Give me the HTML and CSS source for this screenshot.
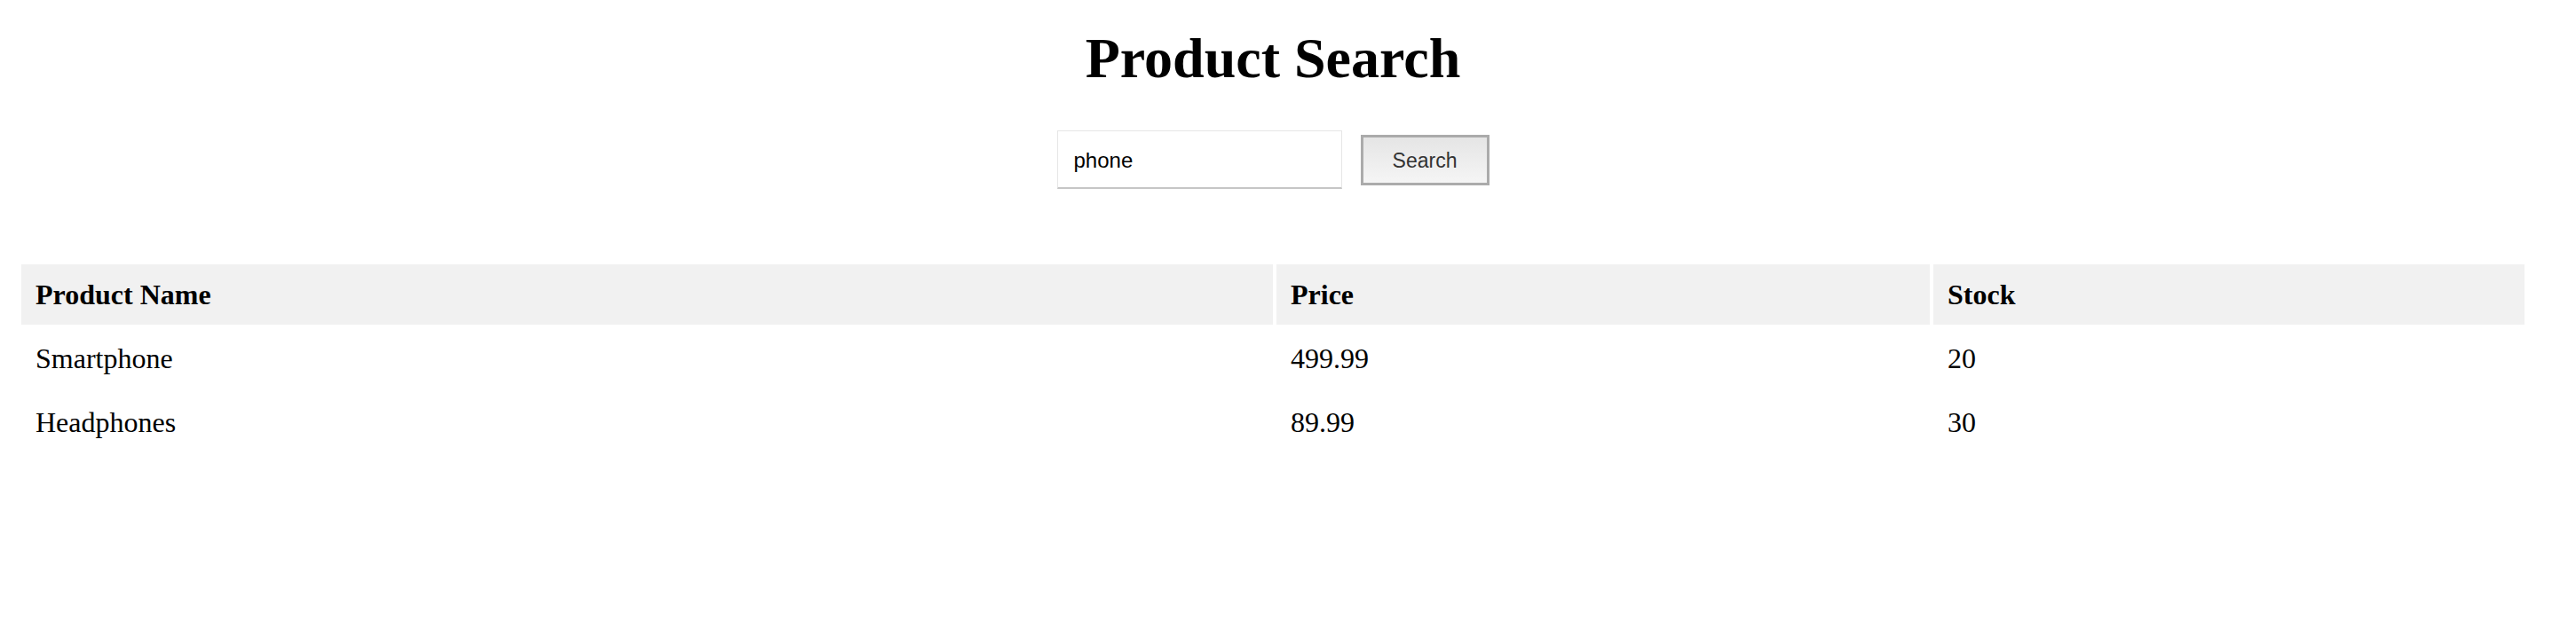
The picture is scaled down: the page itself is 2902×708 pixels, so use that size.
FILE: index.html
```html
<!DOCTYPE html>
<html lang="en">
<head>
<meta charset="utf-8">
<title>Product Search</title>
<link rel="stylesheet" href="styles.css">
</head>
<body>
<h1 class="title">Product Search</h1>
<form class="search" onsubmit="return false;">
  <input class="search-input" type="text" value="phone">
  <button class="search-btn" type="submit">Search</button>
</form>
<table class="results">
  <thead>
    <tr>
      <th class="col-name">Product Name</th>
      <th class="col-price">Price</th>
      <th class="col-stock">Stock</th>
    </tr>
  </thead>
  <tbody>
    <tr><td>Smartphone</td><td>499.99</td><td>20</td></tr>
    <tr><td>Headphones</td><td>89.99</td><td>30</td></tr>
  </tbody>
</table>
</body>
</html>
```
FILE: styles.css
```css
html, body {
  background: #fff;
}
body {
  margin: 0 54px 0 20px;
  font-family: "Liberation Serif", "Times New Roman", serif;
  font-size: 32px;
  color: #000;
}
.title {
  margin: 30px 0 0;
  font-size: 64px;
  line-height: 71px;
  font-weight: 700;
  text-align: center;
}
.search {
  margin-top: 46px;
  display: flex;
  justify-content: center;
  align-items: center;
  gap: 21px;
}
.search-input {
  box-sizing: border-box;
  width: 321px;
  height: 66px;
  margin: 0;
  padding: 2px 18px 0;
  border: 1px solid #e6e6e6;
  border-bottom: 2px solid #c6c6c6;
  background: #fff;
  font-family: "Liberation Sans", Arial, sans-serif;
  font-size: 24px;
  color: #000;
  outline: none;
}
.search-btn {
  box-sizing: border-box;
  width: 145px;
  height: 57px;
  margin: 0;
  padding: 2px 0 0;
  border: 3px solid #ababab;
  background: linear-gradient(#e5e5e5, #f5f5f5);
  font-family: "Liberation Sans", Arial, sans-serif;
  font-size: 23px;
  color: #333;
}
.results {
  margin-top: 81px;
  width: 100%;
  table-layout: fixed;
  border-spacing: 4px;
}
.results th,
.results td {
  box-sizing: border-box;
  text-align: left;
  line-height: 36px;
  font-size: 32px;
}
.results th {
  padding: 16px;
  background: #f1f1f1;
  font-weight: 700;
}
.results td {
  padding: 16px;
  font-weight: 400;
}
.col-name { width: 1410px; }
.col-price { width: 736px; }
.col-stock { width: 666px; }
```
